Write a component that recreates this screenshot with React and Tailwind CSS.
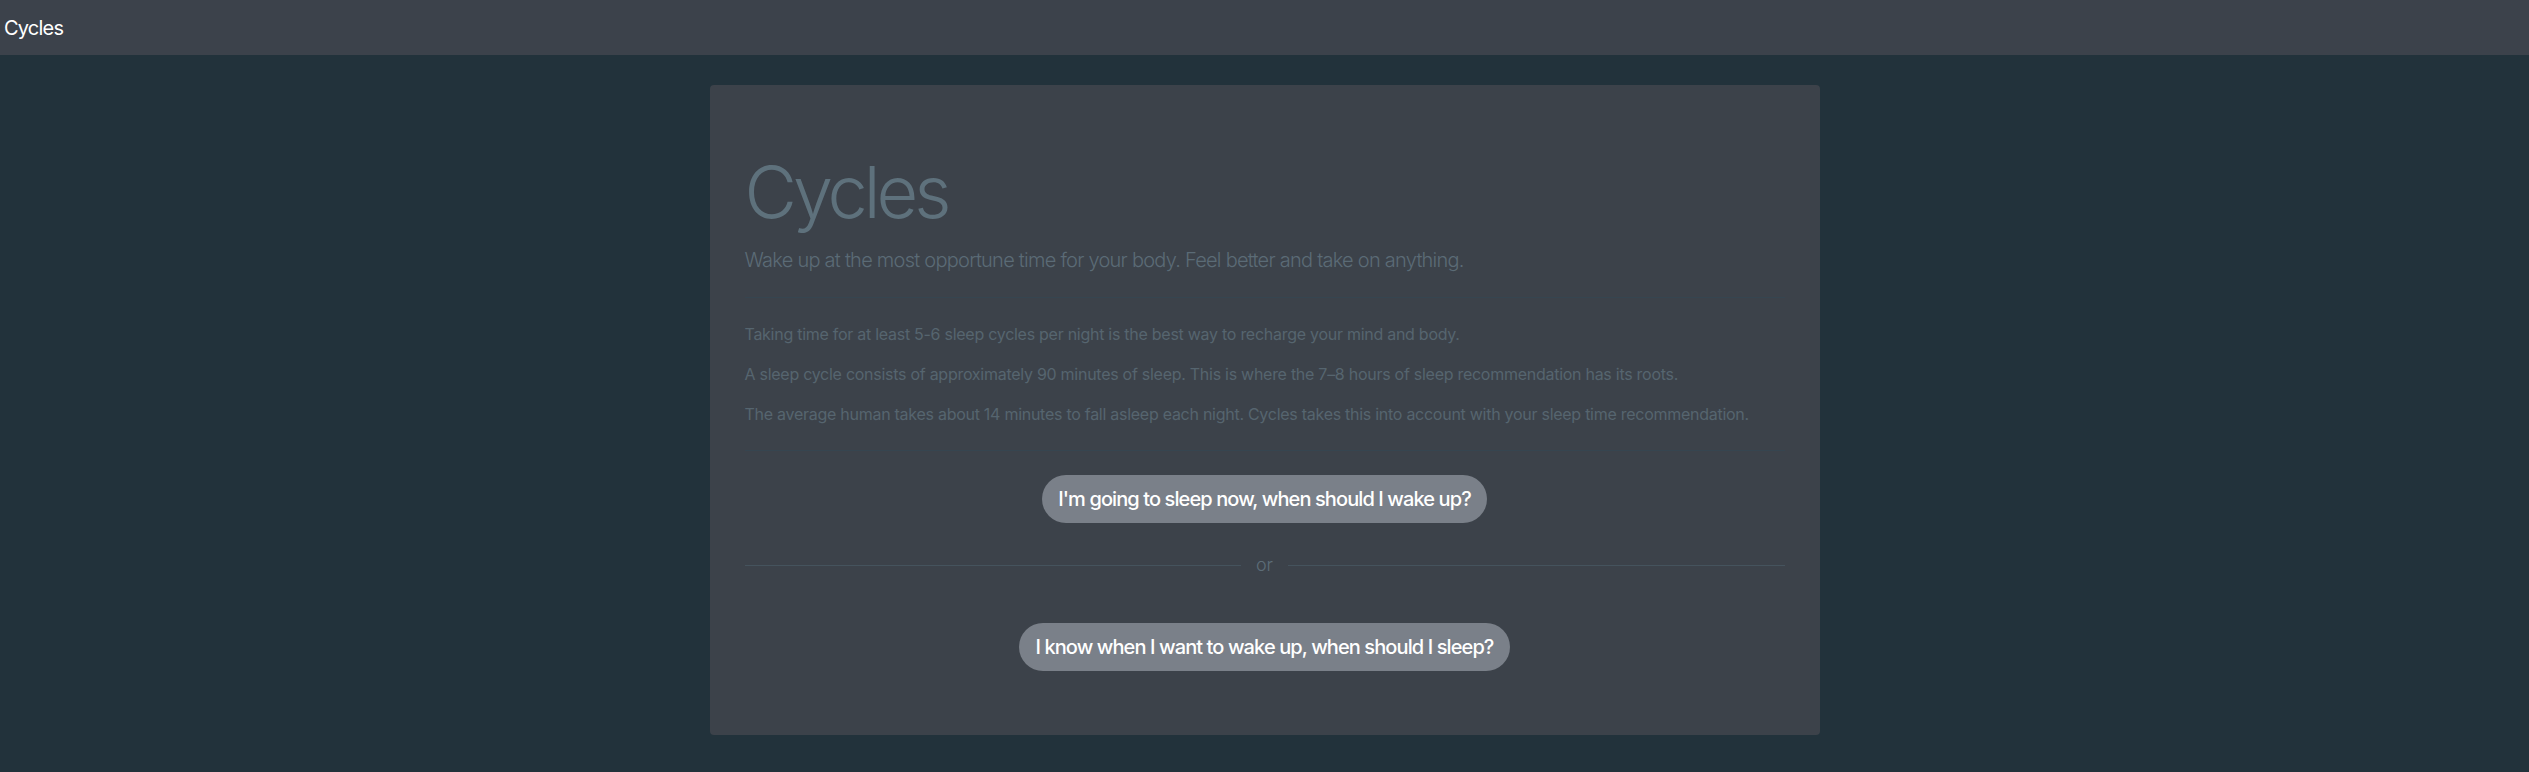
export default function App() {
  return (
    <div className="min-h-screen bg-[#22323b] font-['Inter','Liberation_Sans',sans-serif]">
      <nav className="flex h-[55px] items-center bg-[#3c424b] px-1">
        <span className="text-xl tracking-[-0.8px] text-white">Cycles</span>
      </nav>

      <main className="pt-[30px]">
        <div className="mx-auto w-[1110px] rounded bg-[#3c424a] px-[35px] py-16">
          <h1 className="text-[72px] font-light leading-[1.2] tracking-[-4px] text-[#5e717c]">
            Cycles
          </h1>
          <p className="mt-2.5 text-xl font-light leading-[30px] tracking-[-0.75px] text-[#5b6b76]">
            Wake up at the most opportune time for your body. Feel better and take on anything.
          </p>

          <div className="mt-[22px] mb-6 h-px bg-[#364550]" />

          <div className="space-y-4 text-base leading-6 tracking-[-0.27px] text-[#56656f]">
            <p>
              Taking time for at least 5-6 sleep cycles per night is the best way to recharge your mind and body.
            </p>
            <p>
              A sleep cycle consists of approximately 90 minutes of sleep. This is where the 7–8 hours of sleep
              recommendation has its roots.
            </p>
            <p>
              The average human takes about 14 minutes to fall asleep each night. Cycles takes this into account
              with your sleep time recommendation.
            </p>
          </div>

          <div className="my-6 h-px bg-[#364550]" />

          <div className="flex justify-center">
            <button className="h-12 rounded-full bg-[#7a8089] px-4 text-xl font-medium tracking-[-0.9px] text-white">
              I'm going to sleep now, when should I wake up?
            </button>
          </div>

          {/* divider */}
          <div className="mt-[30px] flex items-center gap-[15px]">
            <div className="h-px flex-1 bg-[#45535d]" />
            <span className="text-lg font-light leading-6 text-[#5c6d78]">or</span>
            <div className="h-px flex-1 bg-[#45535d]" />
          </div>

          <div className="mt-[46px] flex justify-center">
            <button className="h-12 rounded-full bg-[#7a8089] px-4 text-xl font-medium tracking-[-0.9px] text-white">
              I know when I want to wake up, when should I sleep?
            </button>
          </div>
        </div>
      </main>
    </div>
  );
}
